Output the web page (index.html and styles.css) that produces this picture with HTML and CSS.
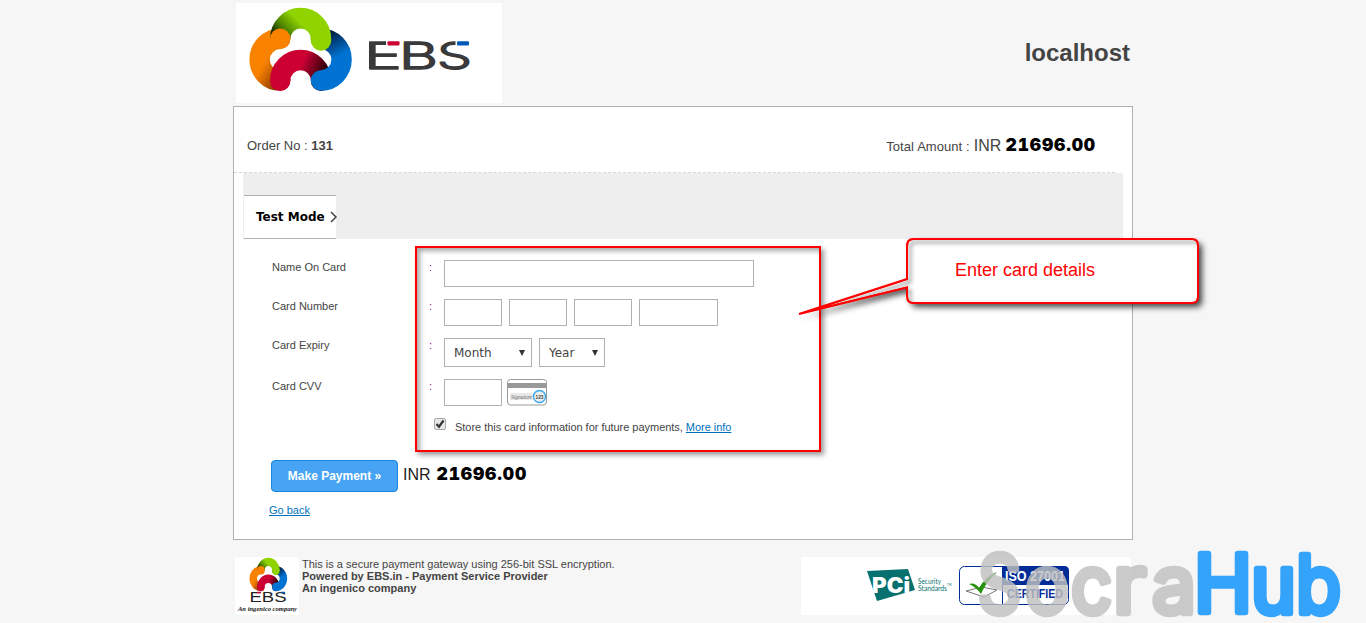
FILE: index.html
```
<!DOCTYPE html>
<html>
<head>
	<meta charset="utf-8">
	<title>EBS Payment</title>
	<link rel="stylesheet" href="styles.css">
</head>
<body>
	<svg class="defs" width="0" height="0">
		<defs>
			<linearGradient id="greenShade" gradientUnits="userSpaceOnUse" x1="44" y1="36" x2="62" y2="18">
				<stop offset="0" stop-color="#173000"/><stop offset="0.4" stop-color="#4c8300"/><stop offset="1" stop-color="#8fd400"/>
			</linearGradient>
			<linearGradient id="orangeShade" gradientUnits="userSpaceOnUse" x1="47" y1="73" x2="28" y2="61">
				<stop offset="0" stop-color="#8d3a00"/><stop offset="1" stop-color="#f98300"/>
			</linearGradient>
			<linearGradient id="redShade" gradientUnits="userSpaceOnUse" x1="90" y1="68" x2="67" y2="58">
				<stop offset="0" stop-color="#26000a"/><stop offset="1" stop-color="#cc0033"/>
			</linearGradient>
			<linearGradient id="blueShade" gradientUnits="userSpaceOnUse" x1="92" y1="32" x2="103" y2="53">
				<stop offset="0" stop-color="#001f45"/><stop offset="1" stop-color="#0072d2"/>
			</linearGradient>
		</defs>
		<symbol id="rings" viewBox="12 4 106 86" preserveAspectRatio="none">
			<g fill="none" stroke-width="20.4">
				<path stroke="url(#orangeShade)" stroke-linecap="round" d="M44.2 36.4A20.6 20.6 0 0 0 44.2 77.6"/>
				<path stroke="url(#redShade)" stroke-linecap="round" d="M44.2 77.8A20.4 20.4 0 0 1 85 77.8"/>
				<path stroke="url(#blueShade)" stroke-linecap="round" d="M85 36.4A20.6 20.6 0 0 1 85 77.6"/>
				<path stroke="url(#greenShade)" d="M44.2 36.4A20.4 20.4 0 0 1 85 36.4V38"/>
			</g>
			<circle cx="85" cy="38" r="10.2" fill="#8fd400"/>
			<circle cx="44.2" cy="36.4" r="10.2" fill="#f98300"/>
		</symbol>
	</svg>

	<div class="wrapper">
		<div class="header">
			<div class="logo">
				<svg width="266" height="100" viewBox="0 0 266 100">
					<use href="#rings" x="12" y="3" width="106" height="87"/>
					<g class="logo-text">
						<text x="128" y="66" textLength="38" lengthAdjust="spacingAndGlyphs">E</text>
						<text x="163" y="66" textLength="39" lengthAdjust="spacingAndGlyphs">B</text>
						<text x="201" y="66" textLength="35" lengthAdjust="spacingAndGlyphs">S</text>
					</g>
					<rect x="150" y="37" width="14.500" height="6" fill="#fff"/>
					<rect x="151.500" y="38.2" width="12" height="4.2" rx="1" fill="#cc0033"/>
					<rect x="219.500" y="36" width="16" height="11" fill="#fff"/>
					<rect x="221" y="38.2" width="12" height="4.2" rx="1" fill="#005bb8"/>
				</svg>
			</div>
			<div class="merchant">localhost</div>
		</div>

		<div class="panel">
			<div class="order">
				<div>Order No : <b>131</b></div>
				<div class="total">Total Amount : <span class="currency">INR</span> <span class="amount">21696.00</span></div>
			</div>
			<div class="modes">
				<div class="tab">
					<span>Test Mode</span>
					<svg width="8" height="12" viewBox="0 0 8 12"><path d="M1 1L6 6L1 11" fill="none" stroke="#444" stroke-width="1.5"/></svg>
				</div>
			</div>

			<div class="form">
				<div class="row">
					<label>Name On Card</label><i>:</i>
					<input class="name" type="text">
				</div>
				<div class="row">
					<label>Card Number</label><i>:</i>
					<input type="text"><input type="text"><input type="text"><input class="last" type="text">
				</div>
				<div class="row expiry">
					<label>Card Expiry</label><i>:</i>
					<div class="select month">Month<span></span></div>
					<div class="select year">Year<span></span></div>
				</div>
				<div class="row">
					<label>Card CVV</label><i>:</i>
					<input class="cvv" type="text">
					<svg width="40" height="27" viewBox="0 0 40 27">
						<rect x="0.5" y="0.5" width="39" height="25.5" rx="3" fill="#fff" stroke="#999"/>
						<rect x="1" y="4" width="38" height="5" fill="#999"/>
						<rect x="3" y="14" width="25" height="7" fill="#e9e9e9"/>
						<text x="4" y="20" class="signature" textLength="21" lengthAdjust="spacingAndGlyphs">Signature</text>
						<circle cx="32.5" cy="17.5" r="6" fill="#eee" stroke="#38a8f5" stroke-width="1.4"/>
						<text x="28.5" y="20" class="digits" textLength="8" lengthAdjust="spacingAndGlyphs">123</text>
					</svg>
				</div>
				<div class="store">
					<div class="check"><svg width="12" height="12" viewBox="0 0 12 12"><path d="M2.5 6L5 8.7L9.5 2.5" fill="none" stroke="#333" stroke-width="2.2"/></svg></div>
					<div class="store-text">Store this card information for future payments, <a href="#">More info</a></div>
				</div>
				<div class="pay">
					<button>Make Payment »</button>
					<span class="currency">INR</span>
					<span class="amount">21696.00</span>
				</div>
				<a class="back" href="#">Go back</a>
			</div>
		</div>

		<div class="footer">
			<div class="small-logo">
				<svg width="64" height="58" viewBox="0 0 64 58">
					<use href="#rings" x="14" y="0" width="39" height="35"/>
					<text x="14.500" y="45" class="small-ebs" textLength="37" lengthAdjust="spacingAndGlyphs">EBS</text>
					<path d="M22 35.500h4" stroke="#cc0033" stroke-width="1.5"/>
					<path d="M46 35.500h4" stroke="#005bb8" stroke-width="1.5"/>
					<text x="3" y="54" class="ingenico" textLength="59" lengthAdjust="spacingAndGlyphs">An ingenico company</text>
				</svg>
			</div>
			<div class="about">
				This is a secure payment gateway using 256-bit SSL encryption.<br>
				<b>Powered by EBS.in - Payment Service Provider<br>
				An ingenico company</b>
			</div>
			<div class="badges">
				<svg width="330" height="58" viewBox="0 0 330 58">
					<path d="M66 14L107 12L114 33L76 44Z" fill="#08716f"/>
					<text x="71" y="36" class="pci" textLength="38" lengthAdjust="spacingAndGlyphs">PCi</text>
					<g class="standards">
						<text x="117" y="27" textLength="23" lengthAdjust="spacingAndGlyphs">Security</text>
						<text x="117" y="34" textLength="29" lengthAdjust="spacingAndGlyphs">Standards</text>
						<text x="146" y="29" class="tm">TM</text>
					</g>
					<rect x="158.500" y="9.500" width="109" height="38" rx="5" fill="#fff" stroke="#002c96"/>
					<path d="M201 9H263Q268 9 268 14V28H201Z" fill="#002c96"/>
					<path d="M201.500 9V48" stroke="#002c96"/>
					<path d="M165 34L181 30L196 33L183 40Z" fill="#fff" stroke="#777"/>
					<path d="M168 27Q174 25 178 31Q185 19 196 15Q185 25 180 37Q175 30 168 27Z" fill="#27920b"/>
					<text x="204" y="24" class="iso" textLength="60" lengthAdjust="spacingAndGlyphs">ISO 27001</text>
					<text x="206" y="41" class="certified" textLength="56" lengthAdjust="spacingAndGlyphs">CERTIFIED</text>
				</svg>
			</div>
		</div>
	</div>

	<!-- notes over the page -->
	<div class="highlight"></div>
	<svg class="callout" width="430" height="90" viewBox="0 0 430 90">
		<clipPath id="bubble"><path d="M123 9H402Q408 9 408 15V67Q408 73 402 73H123Q117 73 117 66V57.500L9 84L117 49V16Q117 9 123 9Z"/></clipPath>
		<path class="body" d="M123 9H402Q408 9 408 15V67Q408 73 402 73H123Q117 73 117 66V57.500L9 84L117 49V16Q117 9 123 9Z" fill="#fff"/>
		<g clip-path="url(#bubble)">
			<path class="inner" d="M123 9H402Q408 9 408 15V67Q408 73 402 73H123Q117 73 117 66V57.500L9 84L117 49V16Q117 9 123 9Z" fill="none" stroke="#f00" stroke-width="2"/>
		</g>
		<path d="M123 9H402Q408 9 408 15V67Q408 73 402 73H123Q117 73 117 66V57.500L9 84L117 49V16Q117 9 123 9Z" fill="none" stroke="#f00" stroke-width="2"/>
		<text x="165" y="46">Enter card details</text>
	</svg>
	<svg class="watermark" width="390" height="80" viewBox="976 543 390 80">
		<g class="socra">
			<text x="978" y="613" textLength="43" lengthAdjust="spacingAndGlyphs">S</text>
			<text x="1025" y="613" textLength="44" lengthAdjust="spacingAndGlyphs">o</text>
			<text x="1071" y="613" textLength="41" lengthAdjust="spacingAndGlyphs">c</text>
			<text x="1113" y="613" textLength="33" lengthAdjust="spacingAndGlyphs">r</text>
			<text x="1152" y="613" textLength="44" lengthAdjust="spacingAndGlyphs">a</text>
		</g>
		<g class="hub">
			<text x="1194" y="612" textLength="58" lengthAdjust="spacingAndGlyphs">H</text>
			<text x="1251" y="613" textLength="45" lengthAdjust="spacingAndGlyphs">u</text>
			<text x="1296" y="613" textLength="45" lengthAdjust="spacingAndGlyphs">b</text>
		</g>
	</svg>
</body>
</html>
```
FILE: styles.css
```
body {
	margin: 0;
	height: 623px;
	overflow: hidden;
	position: relative;
	background: #f6f6f6;
	font-family: "Liberation Sans", Arial, sans-serif;
	font-size: 11px;
	color: #444;
}

svg {
	display: block;
}

.defs {
	position: absolute;
}

a {
	color: #0072bc;
}

.wrapper {
	width: 900px;
	margin: 0 auto;
}

.header {
	height: 103px;
	padding: 3px 3px 0;
	box-sizing: border-box;
	margin-bottom: 3px;
	display: flex;
	justify-content: space-between;
	align-items: center;
}

.logo {
	background: #fff;
}

.logo-text {
	font-family: Inter, sans-serif;
	font-size: 37px;
	font-weight: 300;
	fill: #3a3a3c;
	stroke: #3a3a3c;
	stroke-width: 1.3;
	stroke-linejoin: round;
}

.merchant {
	font-size: 24px;
	font-weight: bold;
}

.panel {
	height: 434px;
	box-sizing: border-box;
	background: #fff;
	border: 1px solid #b1b1b1;
}

.order {
	height: 66px;
	width: 881px;
	padding: 12px 19px 0 13px;
	box-sizing: border-box;
	border-bottom: 1px dashed #d5d5d5;
	display: flex;
	justify-content: space-between;
	align-items: center;
	font-size: 13px;
}

.total {
	margin-top: -2px;
	word-spacing: 0.5px;
}

.currency {
	font-size: 16px;
}

.amount {
	font-family: "Arial Black", Inter, sans-serif;
	font-size: 17.5px;
	font-weight: 900;
	font-variant-numeric: tabular-nums;
	letter-spacing: 0.85px;
	color: #000;
}

.modes {
	height: 66px;
	margin: 0 9px;
	padding-top: 22px;
	box-sizing: border-box;
	background: #eee;
}

.tab {
	width: 92px;
	height: 44px;
	margin-left: 1px;
	padding-left: 12px;
	box-sizing: border-box;
	background: #fff;
	border-top: 1px solid #b1b1b1;
	border-bottom: 1px solid #b1b1b1;
	display: flex;
	align-items: center;
	gap: 5px;
	white-space: nowrap;
	font-family: "DejaVu Sans", Verdana, sans-serif;
	font-size: 12px;
	font-weight: bold;
	color: #000;
}

.tab svg {
	flex: none;
}

.form {
	padding: 21px 0 0 38px;
}

.row {
	display: flex;
	height: 27px;
	margin-bottom: 12px;
}

.row label {
	width: 157px;
	line-height: 15px;
}

.row i {
	width: 15px;
	line-height: 15px;
	font-style: normal;
	color: #909;
}

.row input {
	width: 58px;
	height: 27px;
	margin: 0 7px 0 0;
	padding: 0 5px;
	box-sizing: border-box;
	border: 1px solid #b1b1b1;
	background: #fff;
}

.row .name {
	width: 310px;
}

.row .last {
	width: 79px;
}

.row .cvv {
	margin-right: 5px;
}

.row.expiry {
	height: 29px;
}

.select {
	display: flex;
	align-items: center;
	justify-content: space-between;
	height: 29px;
	margin-right: 7px;
	padding: 0 6px 0 9px;
	box-sizing: border-box;
	border: 1px solid #b1b1b1;
	font-family: "DejaVu Sans", Verdana, sans-serif;
	font-size: 12px;
}

.select span {
	border: 3px solid transparent;
	border-top: 6px solid #333;
	border-bottom: 0;
}

.month {
	width: 88px;
}

.year {
	width: 66px;
}

.signature {
	font: italic 6px "Liberation Serif", serif;
	fill: #666;
}

.digits {
	font: bold 6px "Liberation Sans", sans-serif;
	fill: #444;
}

.store {
	display: flex;
	gap: 9px;
	margin-left: 162px;
	height: 18px;
	line-height: 18px;
}

.store-text {
	letter-spacing: -0.03px;
}

.check {
	width: 12px;
	height: 12px;
	box-sizing: border-box;
	border: 1px solid #aaa;
	border-radius: 2px;
	background: #e8e8e8;
}

.check svg {
	margin: -1px;
}

.pay {
	display: flex;
	align-items: center;
	height: 32px;
	margin: 24px 0 0 -1px;
	color: #222;
}

.pay button {
	width: 127px;
	height: 32px;
	margin: 0 5px 0 0;
	padding: 0;
	border: 1px solid #1b86e0;
	border-radius: 4px;
	background: #47a3f3;
	color: #fff;
	font: bold 12px "Liberation Sans", Arial, sans-serif;
}

.pay .currency {
	margin: -3px 6px 0 0;
}

.pay .amount {
	margin-top: -5px;
}

.back {
	display: inline-block;
	margin: 12px 0 0 -3px;
}

.footer {
	display: flex;
	margin: 17px 2px 0;
	height: 58px;
}

.small-logo,
.badges {
	background: #fff;
}

.about {
	padding: 1px 0 0 3px;
	flex: 1;
	line-height: 12px;
}

.small-ebs {
	font: 14px "Liberation Sans", sans-serif;
	fill: #222;
}

.ingenico {
	font: italic bold 7px "Liberation Serif", serif;
	fill: #222;
}

.pci {
	font: 900 21px Inter, sans-serif;
	fill: #fff;
}

.standards {
	font: 7px Lato, sans-serif;
	fill: #08716f;
}

.tm {
	font-size: 3px;
}

.iso {
	font: bold 15px "Liberation Sans", sans-serif;
	fill: #fff;
}

.certified {
	font: bold 12px "Liberation Sans", sans-serif;
	fill: #002c96;
}

.highlight {
	position: absolute;
	left: 415px;
	top: 246px;
	width: 406px;
	height: 206px;
	box-sizing: border-box;
	border: 2px solid #f00;
	box-shadow: 3px 3px 5px rgba(0, 0, 0, 0.4), inset 3px 3px 5px rgba(0, 0, 0, 0.35);
}

.callout {
	position: absolute;
	left: 790px;
	top: 230px;
	overflow: visible;
}

.callout .body {
	filter: drop-shadow(4px 4px 3px rgba(0, 0, 0, 0.75));
}

.callout .inner {
	filter: drop-shadow(3px 3px 2px rgba(0, 0, 0, 0.5));
}

.callout text {
	font-size: 18px;
	fill: #f00;
}

.watermark {
	position: absolute;
	left: 976px;
	top: 543px;
	font-family: Inter, sans-serif;
	font-size: 80px;
	stroke-width: 6.5;
	stroke-linejoin: round;
}

.socra {
	fill: #c0c0c0;
	stroke: #c0c0c0;
	opacity: 0.82;
}

.hub {
	fill: #33a3fb;
	stroke: #33a3fb;
}
```
